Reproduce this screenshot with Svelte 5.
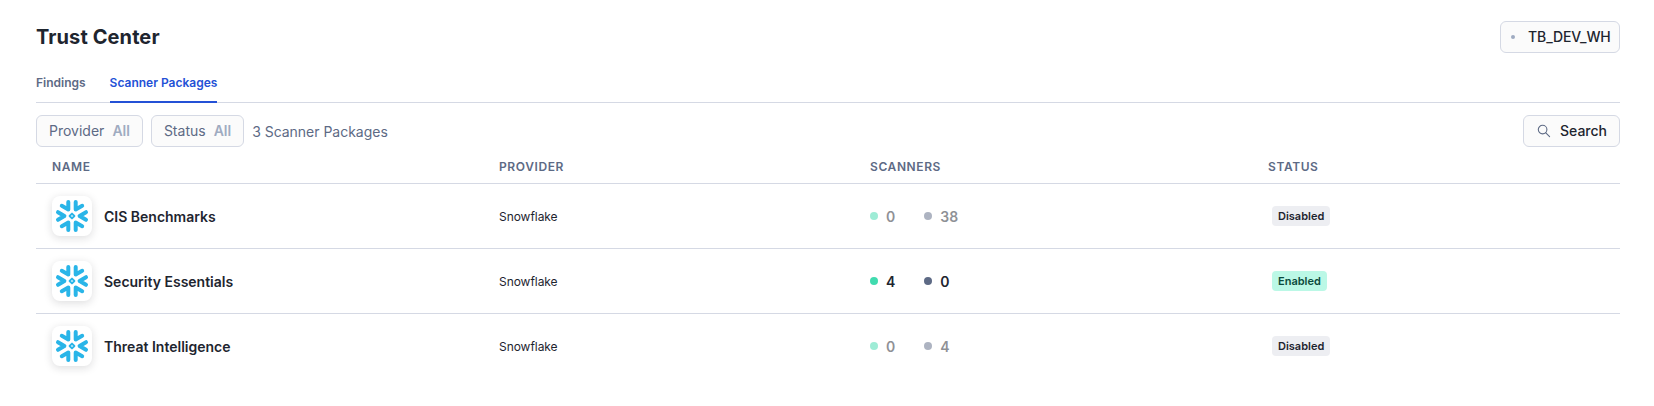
<script>
  const tabs = ['Findings', 'Scanner Packages'];
  const filters = ['Provider', 'Status'];
  const packages = [
    { name: 'CIS Benchmarks', provider: 'Snowflake', on: 0, off: 38, enabled: false },
    { name: 'Security Essentials', provider: 'Snowflake', on: 4, off: 0, enabled: true },
    { name: 'Threat Intelligence', provider: 'Snowflake', on: 0, off: 4, enabled: false },
  ];
  let active = $state('Scanner Packages');
</script>

<main>
  <header>
    <h1>Trust Center</h1>
    <button class="btn warehouse"><i class="tiny"></i>TB_DEV_WH</button>
  </header>

  <nav>
    {#each tabs as tab}
      <button class="tab" class:active={active === tab} onclick={() => (active = tab)}>{tab}</button>
    {/each}
  </nav>

  <div class="toolbar">
    {#each filters as filter}
      <button class="btn filter">{filter}<b>All</b></button>
    {/each}
    <span class="count">{packages.length} Scanner Packages</span>
    <button class="btn search">
      <svg width="14" height="14" viewBox="0 0 14 14" fill="none" stroke="#5d6a85" stroke-width="1.1" stroke-linecap="round">
        <circle cx="5.6" cy="5.6" r="4.3" />
        <path d="M8.8 8.8 12.6 12.6" />
      </svg>
      Search
    </button>
  </div>

  <section class="table">
    <div class="row head">
      <span>NAME</span><span>PROVIDER</span><span>SCANNERS</span><span>STATUS</span>
    </div>
    {#each packages as p}
      <div class="row">
        <div class="name">
          <span class="tile">
            <svg width="40" height="40" viewBox="0 0 40 40" fill="none" stroke="#29b5e8" stroke-width="4" stroke-linecap="round" stroke-linejoin="round">
              <path d="M16.3 6V13.4L9.8 9.8" />
              <path d="M23.7 6V13.4L30.2 9.8" />
              <path d="M16.3 34V26.6L9.8 30.2" />
              <path d="M23.7 34V26.6L30.2 30.2" />
              <path d="M6 16.2L12.4 20L6 23.8" />
              <path d="M34 16.2L27.6 20L34 23.8" />
              <path d="M20 17.6L22.4 20L20 22.4L17.6 20Z" stroke-width="1.9" />
            </svg>
          </span>
          <strong>{p.name}</strong>
        </div>
        <span class="provider">{p.provider}</span>
        <div class="scanners" class:dim={!p.enabled}>
          <span class="stat"><i class="dot green"></i>{p.on}</span>
          <span class="stat"><i class="dot slate"></i>{p.off}</span>
        </div>
        <div class="status">
          <span class="badge" class:enabled={p.enabled}>{p.enabled ? 'Enabled' : 'Disabled'}</span>
        </div>
      </div>
    {/each}
  </section>
</main>

<style>
  :global(body) {
    background: #fff;
  }
  main {
    box-sizing: border-box;
    width: 1654px;
    height: 406px;
    padding: 21px 34px 0 36px;
    font-family: Inter, sans-serif;
    font-size: 14px;
    line-height: 20px;
    color: #1e252f;
  }
  header {
    display: flex;
    justify-content: space-between;
    height: 32px;
  }
  h1 {
    margin: 0;
    font-size: 20px;
    font-weight: 700;
    line-height: 32px;
    letter-spacing: 0.1px;
  }
  button {
    font: inherit;
    margin: 0;
    padding: 0;
    cursor: pointer;
  }
  .btn {
    box-sizing: border-box;
    display: flex;
    align-items: center;
    height: 32px;
    border: 1px solid #d5d9e4;
    border-radius: 6px;
    background: #fbfbfb;
    color: #1e252f;
    font-weight: 500;
    white-space: nowrap;
  }
  .warehouse {
    width: 120px;
    padding-left: 10px;
    letter-spacing: -0.1px;
  }
  .tiny {
    width: 4px;
    height: 4px;
    margin-right: 13px;
    border-radius: 50%;
    background: #9fabc1;
  }
  nav {
    display: flex;
    gap: 24px;
    height: 49px;
    border-bottom: 1px solid #d5d9e4;
  }
  .tab {
    height: 50px;
    padding-top: 18px;
    padding-bottom: 6px;
    box-sizing: border-box;
    border: 0;
    border-bottom: 2px solid transparent;
    background: none;
    color: #5d6a85;
    font-size: 12px;
    font-weight: 600;
  }
  .tab.active {
    color: #2451d6;
    border-color: #2451d6;
  }
  .toolbar {
    display: flex;
    align-items: center;
    gap: 8px;
    padding-top: 12px;
  }
  .filter {
    padding: 0 12px;
    gap: 8px;
    color: #5d6a85;
    font-weight: 400;
  }
  .filter b {
    color: #9fabc1;
    font-weight: 600;
  }
  .count {
    padding-top: 2px;
    color: #5d6a85;
    letter-spacing: -0.02px;
  }
  .search {
    width: 97px;
    margin-left: auto;
    padding-left: 13px;
    gap: 9px;
  }
  .row {
    box-sizing: border-box;
    display: grid;
    grid-template-columns: 447px 371px 398px 1fr;
    align-items: center;
    height: 65px;
    padding-left: 16px;
    border-bottom: 1px solid #d5d9e4;
  }
  .row:last-child {
    border-bottom-color: transparent;
  }
  .head {
    height: 37px;
    color: #5d6a85;
    font-size: 12px;
    font-weight: 600;
    letter-spacing: 0.6px;
    padding-top: 3px;
  }
  .name {
    display: flex;
    align-items: center;
    gap: 12px;
  }
  .name strong {
    font-weight: 600;
    padding-top: 2px;
  }
  .tile {
    width: 40px;
    height: 40px;
    border-radius: 8px;
    background: #fff;
    box-shadow: 0 2px 8px rgba(25, 30, 36, 0.15);
  }
  .tile svg {
    display: block;
  }
  .provider {
    font-size: 12px;
    padding-top: 2px;
    letter-spacing: -0.05px;
  }
  .scanners {
    display: flex;
    gap: 29px;
    font-weight: 600;
    padding-top: 2px;
  }
  .dim {
    opacity: 0.5;
  }
  .stat {
    display: flex;
    align-items: center;
  }
  .dot {
    width: 8px;
    height: 8px;
    margin: 0 8px 2px 0;
    border-radius: 50%;
  }
  .green {
    background: #40dbaf;
  }
  .slate {
    background: #5d6a85;
  }
  .status {
    display: flex;
    padding-left: 4px;
  }
  .badge {
    padding: 0 6px;
    border-radius: 4px;
    background: #edeef2;
    font-size: 11px;
    font-weight: 600;
    line-height: 20px;
  }
  .badge.enabled {
    background: #bbf8e6;
    color: #0b4a3c;
  }
</style>
